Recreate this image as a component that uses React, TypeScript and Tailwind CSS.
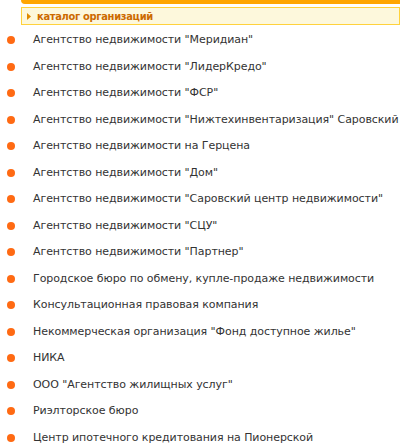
const orgs = [
  'Агентство недвижимости "Меридиан"',
  'Агентство недвижимости "ЛидерКредо"',
  'Агентство недвижимости "ФСР"',
  'Агентство недвижимости "Нижтехинвентаризация" Саровский',
  'Агентство недвижимости на Герцена',
  'Агентство недвижимости "Дом"',
  'Агентство недвижимости "Саровский центр недвижимости"',
  'Агентство недвижимости "СЦУ"',
  'Агентство недвижимости "Партнер"',
  'Городское бюро по обмену, купле-продаже недвижимости',
  'Консультационная правовая компания',
  'Некоммерческая организация "Фонд доступное жилье"',
  'НИКА',
  'ООО "Агентство жилищных услуг"',
  'Риэлторское бюро',
  'Центр ипотечного кредитования на Пионерской',
];

export default function App() {
  return (
    <div className="h-[448px] w-[400px] overflow-hidden bg-white font-['DejaVu_Sans',sans-serif]">
      <div className="ml-[21px] h-[4px] rounded-bl-[4px] bg-[#ffa500]" />
      <div className="ml-[21px] mt-[3px] flex h-[18px] items-center border border-[#ffd23c] bg-[#fdf8dc] pl-[5px]">
        <svg width="4" height="7" viewBox="0 0 4 7" className="mr-[6px]">
          <path d="M0 0 L4 3.5 L0 7 Z" fill="#e08a00" />
        </svg>
        <span className="font-['DejaVu_Sans_Condensed',sans-serif] text-[11px] font-bold leading-none tracking-[-0.3px] text-[#cc6a00]">
          каталог организаций
        </span>
      </div>
      <ul className="mt-[2px]">
        {orgs.map((name) => (
          <li key={name} className="flex h-[26.5px] items-center">
            <span className="ml-[7px] mr-[18px] h-[8px] w-[8px] shrink-0 rounded-full bg-[#ff6a13]" />
            <span className="whitespace-nowrap text-[11px] tracking-[-0.07px] text-[#333]">{name}</span>
          </li>
        ))}
      </ul>
    </div>
  );
}
